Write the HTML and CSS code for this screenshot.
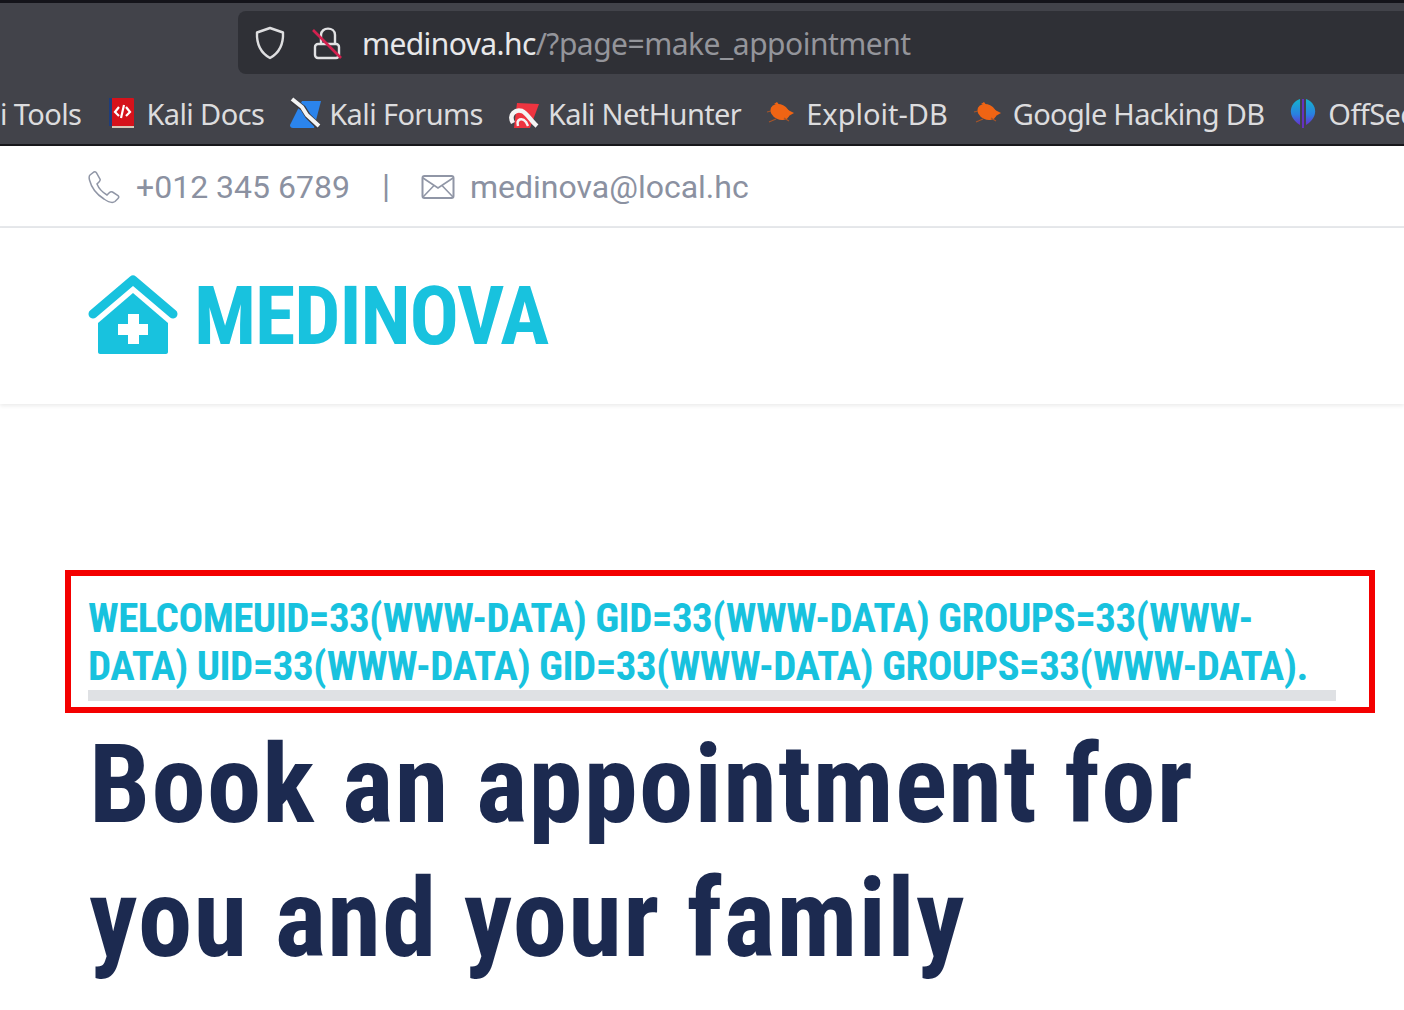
FILE: index.html
```html
<!DOCTYPE html>
<html lang="en">
<head>
  <meta charset="UTF-8">
  <meta name="viewport" content="width=device-width, initial-scale=1.0">
  <title>Medinova</title>
  <link rel="stylesheet" href="styles.css">
</head>
<body>
  <div class="browser">
    <div class="url-row">
      <div class="url-box">
        <svg class="shield" width="32" height="34" viewBox="0 0 32 34"><path d="M16 2 L29 6.5 C29.5 18 26 26.500 16 32 C6 26.500 2.500 18 3 6.500 Z" fill="none" stroke="#dedee0" stroke-width="2.400" stroke-linejoin="round"/></svg>
        <svg class="lock" width="30" height="34" viewBox="0 0 30 34"><path d="M9 18 V9 C9 0.500 23 0.500 23 9 V18" fill="none" stroke="#e2e2e4" stroke-width="2.400"/><rect x="3" y="18" width="24" height="14" rx="3" fill="none" stroke="#e2e2e4" stroke-width="2.400"/><path d="M1 4 L29 32" stroke="#d3204f" stroke-width="2.600"/></svg>
        <span class="url"><span class="host">medinova.hc</span>/?page=make_appointment</span>
      </div>
    </div>
    <div class="bookmarks">
      <span class="mark mark-tools">i Tools</span>
      <span class="mark mark-docs">
        <svg width="26" height="32" viewBox="0 0 26 32"><rect x="1" y="1" width="24" height="28" rx="1" fill="#d5121b"/><rect x="0" y="1" width="3" height="28" fill="#1f3d7a"/><rect x="3" y="29" width="22" height="2" fill="#d8c8b8"/><path d="M10 10 L6 15 L10 19 M17 10 L21 15 L17 19 M15 8 L12 21" fill="none" stroke="#fff" stroke-width="2.200"/></svg>
        Kali Docs
      </span>
      <span class="mark mark-forums">
        <svg width="32" height="32" viewBox="0 0 32 32"><path d="M13 4 H32 L25 31 H4 Q1 31 1 28 Z" fill="#2b84ec"/><path d="M3 3 L14 11 L19 19 L30 30" fill="none" stroke="#3a3a40" stroke-width="6"/><path d="M3 2 L13 10 L18 18 L30 29" fill="none" stroke="#f4f4f4" stroke-width="4"/></svg>
        Kali Forums
      </span>
      <span class="mark mark-hunter">
        <svg width="32" height="32" viewBox="0 0 32 32"><path d="M10 6 L32 7 L23 31 H7 Z" fill="#ee3440"/><path d="M6 26 C1 17 9 12 15 14 C20 16 24 24 30 29" fill="none" stroke="#f4f4f4" stroke-width="4.500"/><path d="M11 29 C9 22 15 20 19 25 L21 29" fill="none" stroke="#f4f4f4" stroke-width="2.500"/></svg>
        Kali NetHunter
      </span>
      <span class="mark mark-exploit">
        <svg width="28" height="26" viewBox="0 0 28 26"><ellipse cx="14" cy="12" rx="10" ry="7.500" transform="rotate(25 14 12)" fill="#ef6414"/><path d="M20 9 L28 13 L21 17 Z M8 4 L11 2 L14 6 Z" fill="#ef6414"/><path d="M1 12 L5 11 M3 22 L10 19 M23 21 L18 18" stroke="#a5552a" stroke-width="1.200"/></svg>
        Exploit-DB
      </span>
      <span class="mark mark-ghdb">
        <svg width="28" height="26" viewBox="0 0 28 26"><ellipse cx="14" cy="12" rx="10" ry="7.500" transform="rotate(25 14 12)" fill="#ef6414"/><path d="M20 9 L28 13 L21 17 Z M8 4 L11 2 L14 6 Z" fill="#ef6414"/><path d="M1 12 L5 11 M3 22 L10 19 M23 21 L18 18" stroke="#a5552a" stroke-width="1.200"/></svg>
        Google Hacking DB
      </span>
      <span class="mark mark-offsec">
        <svg width="30" height="32" viewBox="0 0 30 32"><defs><linearGradient id="offsec" x1="0" y1="0" x2="0" y2="1"><stop offset="0" stop-color="#14b4cc"/><stop offset="0.6" stop-color="#2a7fe0"/><stop offset="1" stop-color="#6a2fd0"/></linearGradient></defs><path d="M12 2 C3 5 -3 18 12 28 Z" fill="url(#offsec)"/><path d="M18 2 C27 5 33 18 18 28 Z" fill="url(#offsec)"/><path d="M15 2 V31" stroke="#6a2fd0" stroke-width="1.800"/></svg>
        OffSec
      </span>
    </div>
  </div>

  <div class="topbar">
    <svg class="topbar-icon" width="34" height="34" viewBox="0 0 34 34"><path d="M3 5 L7 2 C8 1.500 9 2 9.500 3 L13 9 C13.500 10 13 11 12 12 L10 14 C12 19 15 22 20 25 L22.500 22.500 C23.500 21.500 24.500 21.500 25.500 22 L31 25.500 C32 26.500 32 27.500 31 28.500 L28 31.500 C26 33 22 32.500 17 29 C9 24 4 16 2.500 10 C2 8 2 6 3 5 Z" fill="none" stroke="#9096a6" stroke-width="1.500"/></svg>
    <span class="phone">+012 345 6789</span>
    <span class="sep">|</span>
    <svg class="topbar-icon" width="34" height="26" viewBox="0 0 34 26"><rect x="1.500" y="2" width="31" height="22" rx="2" fill="none" stroke="#9096a6" stroke-width="2"/><path d="M2 4 L17 14 L32 4 M2 23 L13 11.500 M32 23 L21 11.500" fill="none" stroke="#9096a6" stroke-width="1.600"/></svg>
    <span class="email">medinova@local.hc</span>
  </div>

  <div class="navbar">
    <svg class="logo-icon" width="92" height="82" viewBox="0 0 92 82"><path d="M6 41 L46 7 L86 41" fill="none" stroke="#18c2de" stroke-width="9" stroke-linecap="round" stroke-linejoin="round"/><path d="M46 20 L81 50 V79 C81 80 80 81 79 81 H13 C12 81 11 80 11 79 V50 Z" fill="#18c2de"/><path d="M41 41 H52 V51 H61 V62 H52 V71 H41 V62 H31 V51 H41 Z" fill="#fff"/></svg>
    <span class="logo-text">MEDINOVA</span>
  </div>

  <main class="content">
    <div class="alert">
      <div class="welcome">WELCOMEUID=33(WWW-DATA) GID=33(WWW-DATA) GROUPS=33(WWW-<br>DATA) UID=33(WWW-DATA) GID=33(WWW-DATA) GROUPS=33(WWW-DATA).</div>
    </div>
    <h1 class="title">Book an appointment for<br>you and your family</h1>
  </main>
</body>
</html>
```

FILE: styles.css
```css
* {
  box-sizing: border-box;
}
html, body {
  height: 100%;
}
body {
  margin: 0;
  background: #fff;
  font-family: Roboto, sans-serif;
  overflow: hidden;
}

/* browser chrome */
.browser {
  height: 146px;
  background: #42434a;
  border-top: 3px solid #14141a;
  border-bottom: 2px solid #17171b;
  overflow: hidden;
}
.url-row {
  padding: 8px 0 0 238px;
}
.url-box {
  display: flex;
  align-items: center;
  height: 63px;
  background: #2f3036;
  border-radius: 8px 0 0 8px;
  padding-left: 16px;
}
.lock {
  margin-left: 26px;
}
.url {
  margin-left: 20px;
  padding-top: 2px;
  font-family: "Noto Sans", sans-serif;
  font-size: 30px;
  color: #94959b;
  white-space: nowrap;
  letter-spacing: -0.5px;
}
.host {
  color: #e8e8ea;
  letter-spacing: -0.6px;
}
.bookmarks {
  display: flex;
  align-items: center;
  height: 62px;
  padding-top: 16px;
  font-family: "Noto Sans", sans-serif;
  font-size: 29px;
  color: #dcdcde;
  white-space: nowrap;
  letter-spacing: -0.6px;
}
.mark {
  display: inline-flex;
  align-items: center;
  gap: 10px;
}
.mark-tools { margin-left: 0; }
.mark-docs { margin-left: 28px; gap: 11px; }
.mark-forums { margin-left: 25px; gap: 8px; }
.mark-hunter { margin-left: 24px; gap: 9px; }
.mark-exploit { margin-left: 25px; gap: 12px; letter-spacing: 0; }
.mark-ghdb { margin-left: 25px; gap: 12px; letter-spacing: -0.7px; }
.mark-offsec { margin-left: 24px; }

/* contact bar */
.topbar {
  display: flex;
  align-items: center;
  height: 82px;
  padding: 1px 0 0 87px;
  border-bottom: 2px solid #e6e8eb;
  font-size: 32px;
  color: #8b91a1;
}
.phone {
  margin-left: 15px;
}
.sep {
  margin-left: 32px;
  font-size: 33px;
}
.topbar-icon:nth-of-type(2) {
  margin-left: 31px;
}
.email {
  margin-left: 15px;
}

/* logo */
.navbar {
  display: flex;
  align-items: center;
  height: 176px;
  padding-left: 87px;
  box-shadow: 0 2px 4px rgba(0, 0, 0, 0.08);
}
.logo-icon {
  margin-bottom: 4px;
}
.logo-text {
  margin-left: 15px;
  font-size: 82px;
  font-weight: 700;
  font-stretch: 75%;
  letter-spacing: -1.1px;
  color: #18c2de;
}

/* page body */
.content {
  padding: 166px 0 0 65px;
}
.alert {
  width: 1310px;
  height: 143px;
  border: 6px solid #f40000;
  padding: 18px 33px 0 17px;
}
.welcome {
  border-bottom: 11px solid #dfe1e4;
  font-size: 41px;
  font-weight: 700;
  font-stretch: 75%;
  letter-spacing: -0.53px;
  line-height: 48px;
  color: #18c2de;
  white-space: nowrap;
  height: 107px;
}
.title {
  margin: 5px 0 0 24px;
  font-size: 109px;
  font-weight: 700;
  font-stretch: 75%;
  letter-spacing: 1.25px;
  line-height: 134px;
  color: #1c2a50;
  white-space: nowrap;
}
```
